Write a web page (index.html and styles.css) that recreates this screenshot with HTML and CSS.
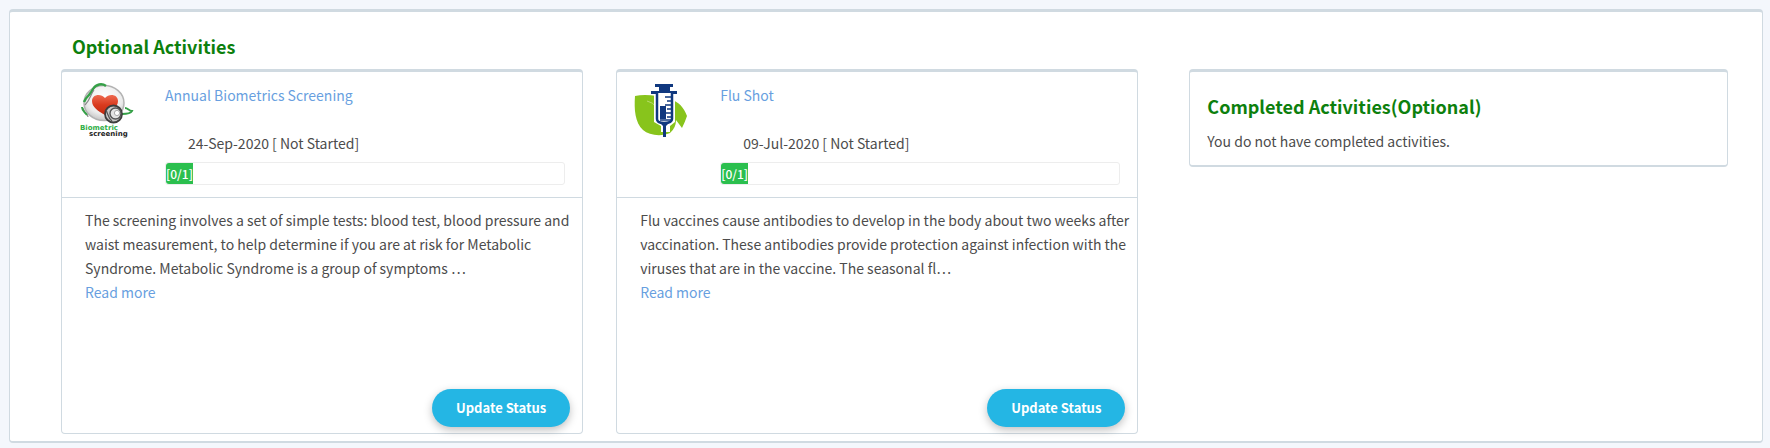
FILE: index.html
```html
<!DOCTYPE html>
<html lang="en">
<head>
<meta charset="utf-8">
<title>Optional Activities</title>
<link rel="stylesheet" href="styles.css">
</head>
<body>
<main class="panel">
  <h2 class="heading panel-heading">Optional Activities</h2>
  <div class="columns">
    <div class="activities">
      <article class="card activity">
        <header class="activity-head">
          <svg class="activity-icon" viewBox="0 0 56 56" role="img" aria-label="Biometric screening">
            <defs>
              <radialGradient id="disc" cx="50%" cy="35%" r="65%">
                <stop offset="0" stop-color="#ffffff"/>
                <stop offset="0.7" stop-color="#ececec"/>
                <stop offset="1" stop-color="#c4c4c4"/>
              </radialGradient>
              <linearGradient id="heart" x1="0" y1="0" x2="0" y2="1">
                <stop offset="0" stop-color="#ee6a50"/>
                <stop offset="0.5" stop-color="#d93a1e"/>
                <stop offset="1" stop-color="#c22a10"/>
              </linearGradient>
            </defs>
            <ellipse cx="25" cy="20" rx="20" ry="17.500" fill="url(#disc)" stroke="#b3b3b3" stroke-width="1.500"/>
            <path d="M5 19 C7 13 12 12 14 6 C17 1 23 0 27 3" fill="none" stroke="#35a047" stroke-width="2.400"/>
            <path d="M4 25 C5 31 9 31 9 34 M15 7 C11 12 12 16 6 22" fill="none" stroke="#888" stroke-width="1.200"/>
            <path d="M3 24 C3 28 6 29 8 32" fill="none" stroke="#35a047" stroke-width="2"/>
            <path d="M26 32 C19 28 13 24 13 18 C13 11 22 10 26 15 C30 10 39 11 39 18 C39 24 32 28 26 32Z" fill="url(#heart)"/>
            <path d="M43 31 C48 31 52 30 53 28 C50 28 49 25 46 25" fill="none" stroke="#35a047" stroke-width="1.800"/>
            <circle cx="34.500" cy="31" r="8.500" fill="#c8c8c8" stroke="#3d3d3d" stroke-width="1.800"/>
            <circle cx="36.500" cy="30.500" r="5.500" fill="#e3e3e3" stroke="#555" stroke-width="1.400"/>
            <circle cx="38" cy="30" r="2.600" fill="#fff" stroke="#999" stroke-width="0.800"/>
            <path d="M27 27 C29 31 29 35 33 38" fill="none" stroke="#555" stroke-width="1.200"/>
            <text class="logo-text"><tspan class="logo-green" x="1" y="47">Biometric</tspan><tspan class="logo-black" x="10" y="53">screening</tspan></text>
          </svg>
          <div class="activity-info">
            <a class="activity-title" href="#biometrics">Annual Biometrics Screening</a>
            <p class="activity-date">24-Sep-2020 [ Not Started]</p>
            <div class="progress" role="progressbar" aria-label="Progress" aria-valuemin="0" aria-valuemax="1" aria-valuenow="0"><span class="progress-bar">[0/1]</span></div>
          </div>
        </header>
        <div class="activity-body">
          <p class="activity-text">The screening involves a set of simple tests: blood test, blood pressure and waist measurement, to help determine if you are at risk for Metabolic Syndrome. Metabolic Syndrome is a group of symptoms …</p>
          <a href="#biometrics-more">Read more</a>
        </div>
        <footer class="activity-foot"><button class="button" type="button">Update Status</button></footer>
      </article>

      <article class="card activity">
        <header class="activity-head">
          <svg class="activity-icon" viewBox="0 0 56 56" role="img" aria-label="Flu shot">
            <path d="M1 13 Q10 11 23 13 L35 16 C45 18 50 25 53 33 Q51 39 48 45 L42 37 Q42 45 36 50 C26 54 15 52 9 47 C1 40 0 26 1 13Z" fill="#88c41c"/>
            <path d="M13 18 Q19 19 23 25" fill="none" stroke="#b7dc6d" stroke-width="1"/>
            <path d="M20 10 H41 V39 L36 43 V49 H27 V43 L20 39Z" fill="#fff"/>
            <path d="M21 1 H39 V4 H36 V8 H43 V11 H17 V8 H25 V4 H21Z" fill="#10387f"/>
            <path d="M23 10 V36 Q23 40 30 40 Q38 40 38 36 V10" fill="#fff" stroke="#10387f" stroke-width="2.500"/>
            <path d="M26 23 H32 V36 H26Z" fill="#10387f"/>
            <path d="M31 14 H38 M33 18 H38 M31 22 H38 M33 26 H38 M31 30 H38 M33 34 H38 M26 37 H37" stroke="#10387f" stroke-width="1.600"/>
            <path d="M25 39 H36 L32 43 V54 H29 V43Z" fill="#10387f"/>
          </svg>
          <div class="activity-info">
            <a class="activity-title" href="#flu">Flu Shot</a>
            <p class="activity-date">09-Jul-2020 [ Not Started]</p>
            <div class="progress" role="progressbar" aria-label="Progress" aria-valuemin="0" aria-valuemax="1" aria-valuenow="0"><span class="progress-bar">[0/1]</span></div>
          </div>
        </header>
        <div class="activity-body">
          <p class="activity-text">Flu vaccines cause antibodies to develop in the body about two weeks after vaccination. These antibodies provide protection against infection with the viruses that are in the vaccine. The seasonal fl…</p>
          <a href="#flu-more">Read more</a>
        </div>
        <footer class="activity-foot"><button class="button" type="button">Update Status</button></footer>
      </article>
    </div>

    <aside class="card completed">
      <h2 class="heading">Completed Activities(Optional)</h2>
      <p class="completed-text">You do not have completed activities.</p>
    </aside>
  </div>
</main>
</body>
</html>
```
FILE: styles.css
```css
* {
  box-sizing: border-box;
}

body {
  margin: 0;
  padding: 9px 7px 5px 9px;
  background: #f4f7fc;
  color: #4c4c4c;
  font-family: "Noto Sans CJK SC", "Open Sans", sans-serif;
  font-size: 14px;
  line-height: 24px;
}

h2,
p {
  margin: 0;
}

a {
  color: #689fe0;
  text-decoration: none;
}

.panel,
.card {
  background: #fff;
  border: 1px solid #d0dae1;
  border-top-width: 3px;
  border-radius: 4px;
}

.panel {
  padding: 21px 34px 7px 51px;
  border-bottom-width: 2px;
}

.heading {
  color: #0d800d;
  font-size: 18px;
  font-weight: 700;
  line-height: 26px;
}

.panel-heading {
  padding: 0 11px 10px;
}

.columns {
  display: grid;
  grid-template-columns: 2fr 1fr;
  align-items: start;
  gap: 51px;
}

.activities {
  display: grid;
  grid-template-columns: 1fr 1fr;
  gap: 33px;
}

.activity {
  display: flex;
  flex-direction: column;
  min-height: 365px;
}

.activity-head {
  display: flex;
  align-items: flex-start;
  gap: 30px;
  padding: 11px 17px 12px;
  border-bottom: 1px solid #d0dae1;
}

.activity-icon {
  flex: none;
  width: 56px;
  height: 56px;
}

.logo-text {
  font-family: "DejaVu Sans", sans-serif;
  font-size: 7px;
  font-weight: bold;
}

.logo-green {
  fill: #2fae45;
}

.logo-black {
  fill: #1c1c1c;
}

.activity-info {
  flex: 1;
}

.activity-title {
  display: block;
}

.activity-date {
  padding: 24px 0 7px 23px;
}

.progress {
  display: flex;
  height: 23px;
  border: 1px solid #ededed;
  border-radius: 3px;
}

.progress-bar {
  background: #2bbf4e;
  border-radius: 3px 0 0 3px;
  color: #fff;
  font-size: 12px;
  font-weight: 500;
  line-height: 22px;
}

.activity-body {
  flex: 1;
  padding: 10px 4px 0 23px;
}

.activity-foot {
  display: flex;
  justify-content: flex-end;
  padding: 0 12px 6px;
}

.button {
  height: 38px;
  padding: 0 24px;
  border: 0;
  border-radius: 19px;
  background: #24b6e4;
  box-shadow: 0 3px 8px rgba(0, 0, 0, 0.25);
  color: #fff;
  font: inherit;
  font-size: 13px;
  font-weight: 700;
}

.completed {
  padding: 21px 17px 12px;
  border-bottom-width: 2px;
}

.completed-text {
  padding-top: 10px;
}
```
